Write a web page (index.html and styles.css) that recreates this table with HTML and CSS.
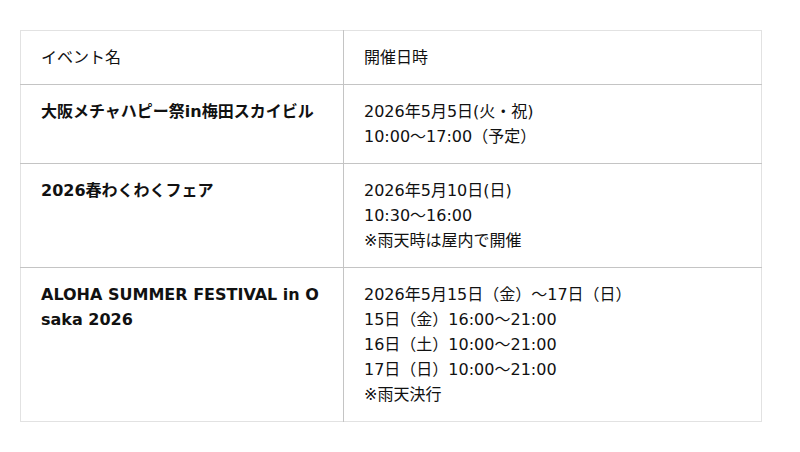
FILE: index.html
```html
<!DOCTYPE html>
<html lang="ja">
<head>
<meta charset="utf-8">
<link rel="stylesheet" href="styles.css">
</head>
<body>
<div class="wrap">
<table class="events">
  <thead>
    <tr><th class="c-name">イベント名</th><th class="c-date">開催日時</th></tr>
  </thead>
  <tbody>
    <tr>
      <td class="c-name">大阪メチャハピー祭in梅田スカイビル</td>
      <td class="c-date">2026年5月5日(火・祝)<br>10:00～17:00（予定）</td>
    </tr>
    <tr>
      <td class="c-name">2026春わくわくフェア</td>
      <td class="c-date">2026年5月10日(日)<br>10:30～16:00<br>※雨天時は屋内で開催</td>
    </tr>
    <tr>
      <td class="c-name">ALOHA SUMMER FESTIVAL in Osaka 2026</td>
      <td class="c-date">2026年5月15日（金）～17日（日）<br>15日（金）16:00～21:00<br>16日（土）10:00～21:00<br>17日（日）10:00～21:00<br>※雨天決行</td>
    </tr>
  </tbody>
</table>
</div>
</body>
</html>
```
FILE: styles.css
```css
html, body {
  margin: 0;
  padding: 0;
  background: #fff;
}
body {
  font-family: "DejaVu Sans", "Noto Sans CJK JP", sans-serif;
  font-size: 16px;
  color: #111;
}
.wrap {
  padding: 30px 38px 0 20px;
}
.events {
  width: 742px;
  border-collapse: collapse;
  table-layout: fixed;
  border: 1px solid #e2e2e2;
}
.events th,
.events td {
  padding: 14px 20px;
  line-height: 25px;
  text-align: left;
  vertical-align: top;
  word-break: break-all;
}
.events th {
  font-weight: normal;
}
.events td.c-name {
  font-weight: bold;
}
.events tbody tr {
  border-top: 1px solid #c4c4c4;
}
.events .c-name {
  width: 282px;
  border-right: 1px solid #c4c4c4;
}
```
